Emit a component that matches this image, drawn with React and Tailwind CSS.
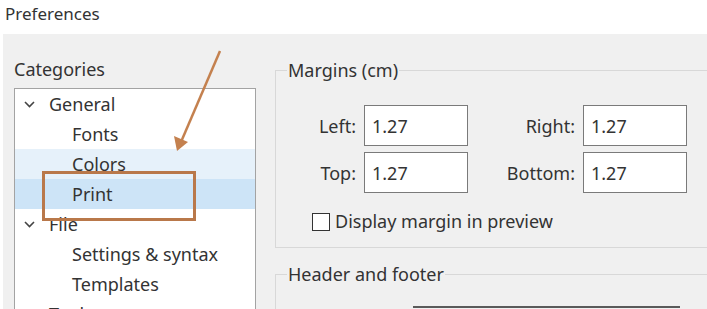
import { useState } from 'react';

const font = { fontFamily: '"Noto Sans", "Open Sans", sans-serif' };

function Chevron() {
  return (
    <svg width="11" height="7" viewBox="0 0 11 7" className="shrink-0">
      <path d="M1 1 L5.5 5.5 L10 1" fill="none" stroke="#444" strokeWidth="1.6" />
    </svg>
  );
}

function TreeRow({ label, level, bg }) {
  return (
    <div className={`h-[30px] flex items-center ${bg || ''}`}>
      {level === 0 ? (
        <div className="flex items-center pl-[9px]">
          <Chevron />
          <span className="ml-[14px]">{label}</span>
        </div>
      ) : (
        <span className="pl-[57px]">{label}</span>
      )}
    </div>
  );
}

function Field({ label, labelW, value }) {
  return (
    <div className="flex items-center">
      <span className="text-right pr-[8px]" style={{ width: labelW }}>
        {label}
      </span>
      <div className="w-[104px] h-[41px] bg-white border border-[#7a7a7a] pl-[7px] flex items-center">
        {value}
      </div>
    </div>
  );
}

export default function App() {
  const [checked, setChecked] = useState(false);

  const rows = [
    { label: 'General', level: 0 },
    { label: 'Fonts', level: 1 },
    { label: 'Colors', level: 1, bg: 'bg-[#e6f1fa]' },
    { label: 'Print', level: 1, bg: 'bg-[#cde4f7]' },
    { label: 'File', level: 0 },
    { label: 'Settings & syntax', level: 1 },
    { label: 'Templates', level: 1 },
    { label: 'Tools', level: 0 },
  ];

  return (
    <div
      className="relative w-[707px] h-[309px] overflow-hidden bg-white text-[18px] leading-[24px] text-[#333]"
      style={font}
    >
      <div className="h-[34px] pl-[5px] pt-[3px] text-[17px] leading-[22px]">Preferences</div>

      <div className="ml-[3px] h-[275px] bg-[#f0f0f0] flex">
        {/* Categories */}
        <div className="w-[253px] shrink-0 pl-[11px] pt-[24px]">
          <div className="leading-[22px]">Categories</div>
          <div className="mt-[8px] w-[242px] h-[240px] bg-white border border-[#a3a3a3] overflow-hidden">
            {rows.map((r) => (
              <TreeRow key={r.label} {...r} />
            ))}
          </div>
        </div>

        {/* Settings */}
        <div className="flex-1 pl-[19px] pt-[24px] flex flex-col">
          <fieldset className="shrink-0 border border-[#d8d8d8] pl-[11px] pb-[12px] mr-[-20px]">
            <legend className="px-[1px] leading-[24px]">Margins (cm)</legend>
            <div className="mt-[23px] flex flex-col gap-[6px]">
              <div className="flex">
                <Field label="Left:" labelW={77} value="1.27" />
                <Field label="Right:" labelW={115} value="1.27" />
              </div>
              <div className="flex">
                <Field label="Top:" labelW={77} value="1.27" />
                <Field label="Bottom:" labelW={115} value="1.27" />
              </div>
            </div>
            <label className="mt-[15px] ml-[25px] flex items-center gap-[5px] leading-[27px]">
              <input
                type="checkbox"
                checked={checked}
                onChange={() => setChecked(!checked)}
                className="appearance-none w-[18px] h-[18px] bg-white border border-[#333] m-0"
              />
              <span>Display margin in preview</span>
            </label>
          </fieldset>

          <fieldset className="shrink-0 mt-[14px] border border-[#d8d8d8] pl-[11px] mr-[-20px] h-[80px]">
            <legend className="px-[1px] leading-[24px]">Header and footer</legend>
            <div className="mt-[20px] ml-[126px] w-[267px] h-[20px] border-t-2 border-[#5a5a5a]" />
          </fieldset>
        </div>
      </div>

      {/* annotation: arrow + box */}
      <svg className="absolute left-0 top-0 pointer-events-none" width="707" height="309">
        <line x1="220" y1="51" x2="181" y2="142" stroke="#c4814f" strokeWidth="2.5" />
        <polygon points="177,151 174,136 188,142" fill="#c4814f" />
      </svg>
      <div className="absolute left-[42px] top-[171px] w-[154px] h-[50px] border-[3px] border-[#b9784a] pointer-events-none" />
    </div>
  );
}
